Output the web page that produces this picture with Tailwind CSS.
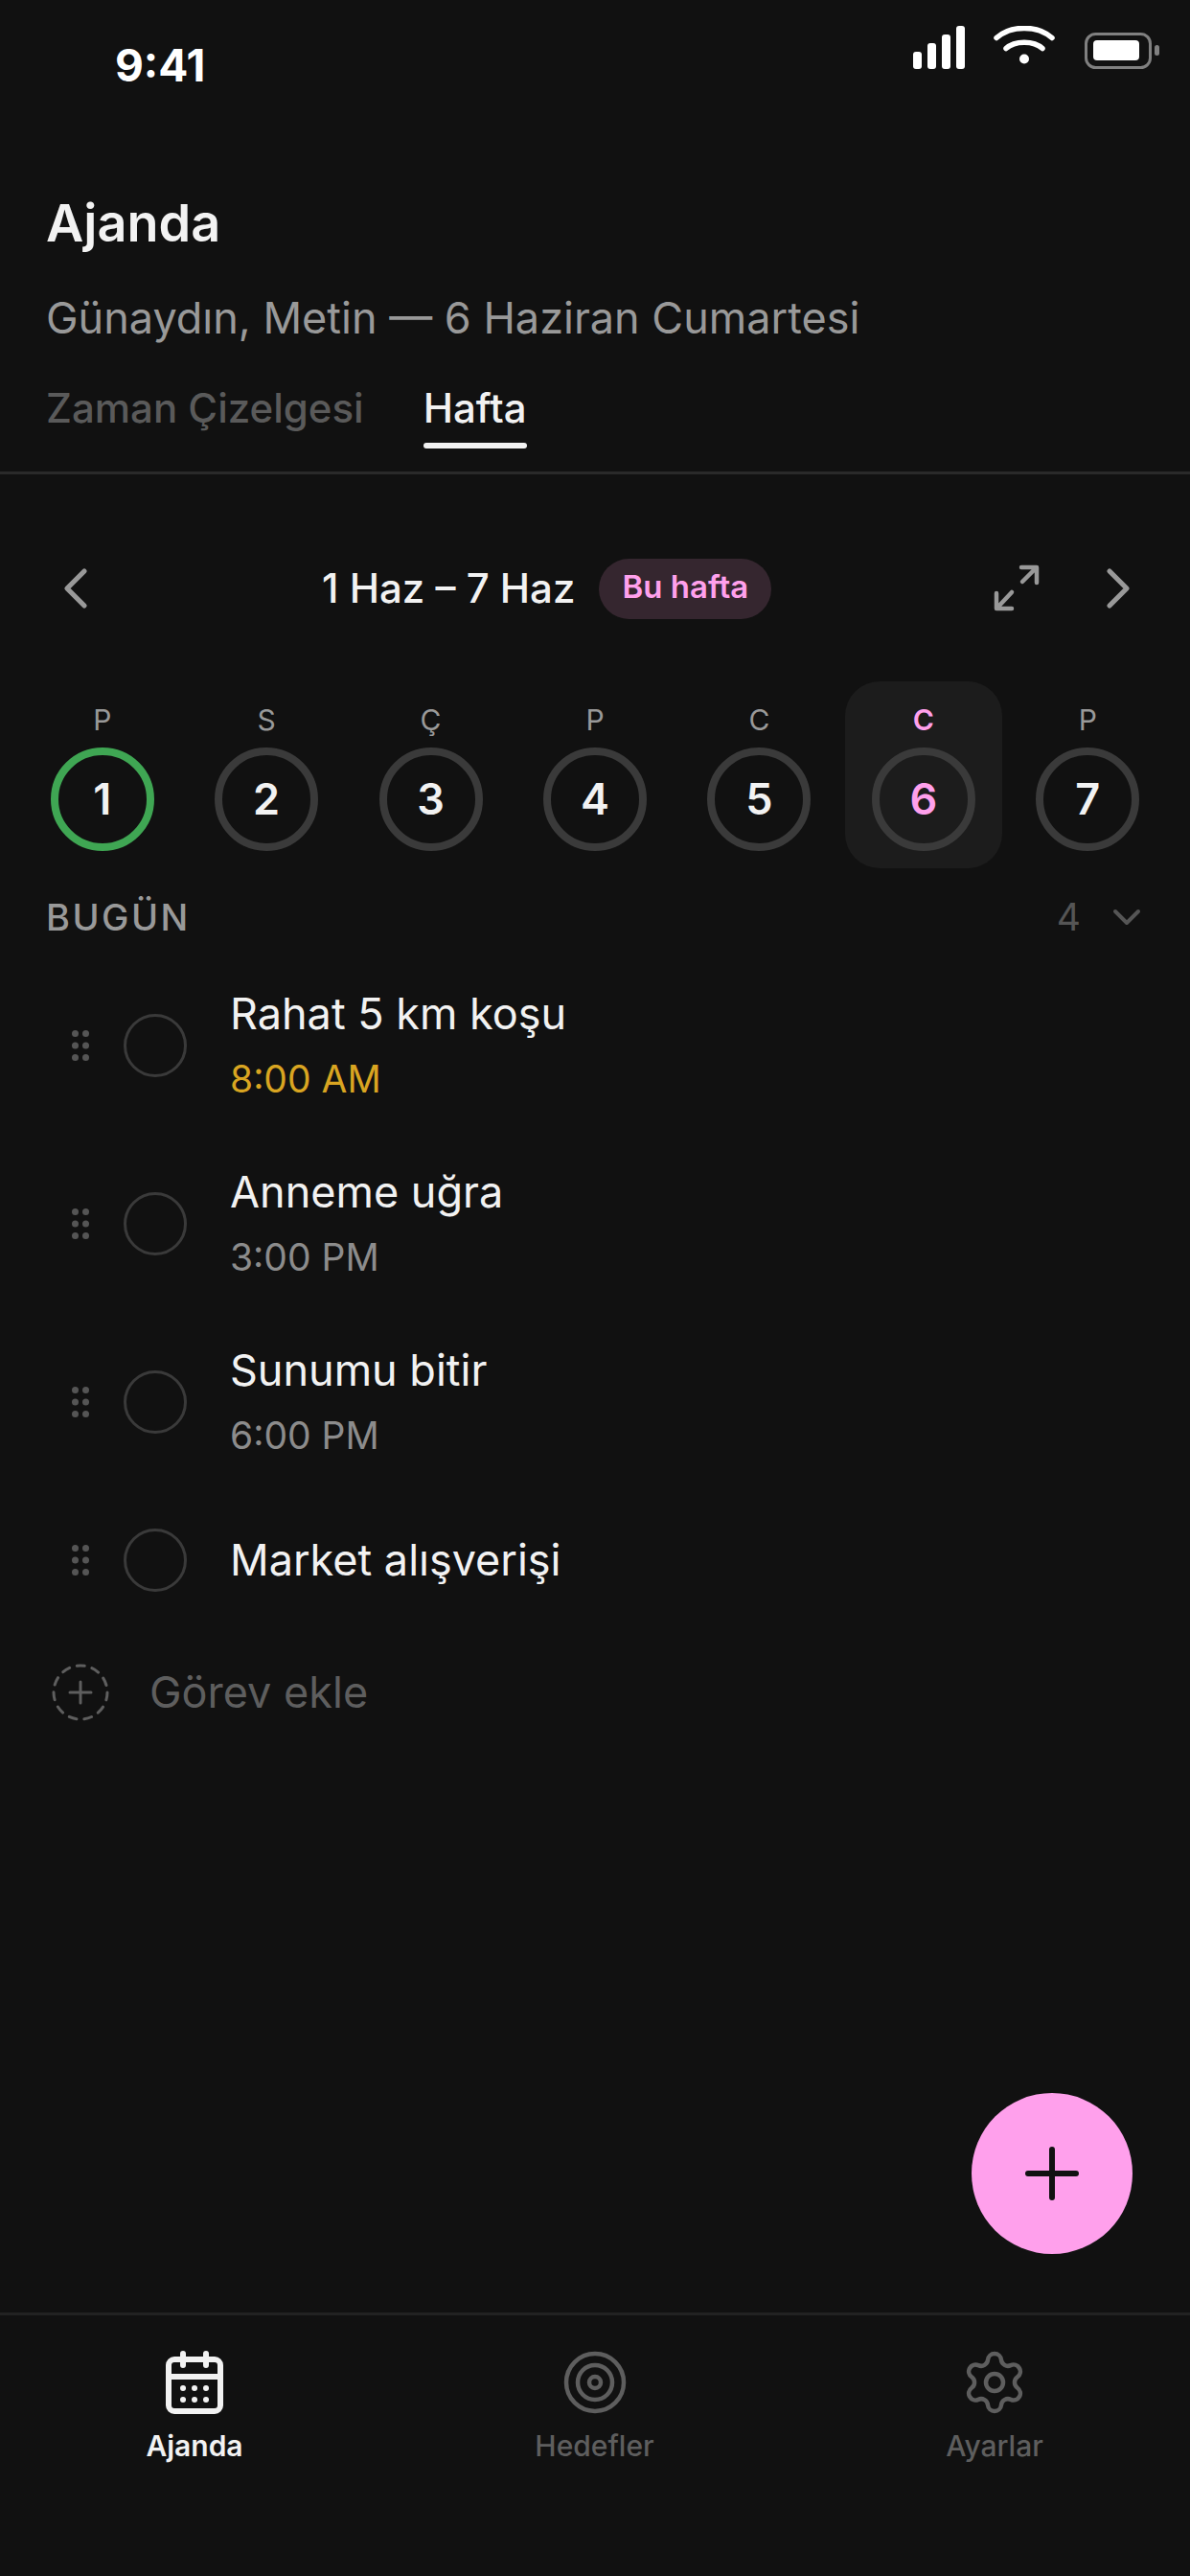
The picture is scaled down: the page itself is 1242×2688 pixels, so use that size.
<!DOCTYPE html>
<html lang="tr">
  <head>
    <meta charset="UTF-8">
    <meta name="viewport" content="width=device-width, initial-scale=1.0">
    <title>Ajanda</title>
    <script src="https://cdn.jsdelivr.net/npm/@tailwindcss/browser@4"></script>
  </head>
  <body class="bg-[#111111]">
    <div class="relative flex flex-col w-[1242px] h-[2688px] overflow-hidden bg-[#111111] text-[#f2f2f2] font-['Inter',sans-serif]">
      <!-- Status bar -->
      <div class="relative h-[192px] shrink-0">
        <span class="absolute left-[120px] top-[38px] text-[46px] leading-[60px] font-bold text-white">9:41</span>
        <svg class="absolute left-[953px] top-[27px]" width="257" height="46" viewBox="0 0 257 46" fill="none">
          <rect x="0" y="27" width="9" height="18" rx="3" fill="#fff"/>
          <rect x="15" y="18" width="9" height="27" rx="3" fill="#fff"/>
          <rect x="30" y="9" width="9" height="36" rx="3" fill="#fff"/>
          <rect x="45" y="0" width="9" height="45" rx="3" fill="#fff"/>
          <path d="M87 12.500C102 -1 130 -1 145 12.500" stroke="#fff" stroke-width="5.500" stroke-linecap="round"/>
          <path d="M97 23.500C106 15 126 15 135 23.500" stroke="#fff" stroke-width="5.500" stroke-linecap="round"/>
          <circle cx="116" cy="34.500" r="5" fill="#fff"/>
          <rect x="180.500" y="8.500" width="67" height="35" rx="10" stroke="#808080" stroke-width="3"/>
          <rect x="188" y="15" width="48" height="21" rx="4" fill="#fff"/>
          <rect x="252" y="20" width="5" height="11" rx="2.500" fill="#808080"/>
        </svg>
      </div>

      <!-- Header -->
      <h1 class="px-[48px] text-[54px] leading-[82px] font-semibold">Ajanda</h1>
      <p class="mt-[28px] px-[48px] text-[45px] leading-[60px] text-[#999999]">Günaydın, Metin — 6 Haziran Cumartesi</p>
      <div class="mt-[34px] flex gap-[62px] px-[48px] pb-[24px] border-b-[3px] border-[#2a2a2a] text-[42px] leading-[60px] font-medium">
        <span class="text-[#5a5a5a]">Zaman Çizelgesi</span>
        <div class="flex flex-col">
          <span>Hafta</span>
          <span class="mt-[6px] h-[6px] rounded-[3px] bg-[#f2f2f2]"></span>
        </div>
      </div>

      <!-- Week navigation -->
      <div class="mt-[59px] h-[120px] flex items-center pl-[43px] pr-[39px]">
        <svg width="72" height="72" viewBox="0 0 24 24" fill="none" stroke="#999999" stroke-width="1.750" stroke-linecap="round" stroke-linejoin="round"><path d="M15 18l-6-6 6-6"/></svg>
        <div class="ml-[221px] flex items-center gap-[25px]">
          <span class="text-[42px] leading-[60px] font-medium">1 Haz – 7 Haz</span>
          <span class="h-[63px] w-[180px] rounded-full bg-[#35262f] text-[#ffa0ec] text-[33px] leading-[58px] font-semibold text-center">Bu hafta</span>
        </div>
        <svg class="ml-auto" width="72" height="72" viewBox="0 0 72 72" fill="none" stroke="#999999" stroke-width="4.500" stroke-linecap="round" stroke-linejoin="round">
          <path d="M42 29L56 15M41 14H57V30"/>
          <path d="M31 40L16 56M15 41V57H31"/>
        </svg>
        <svg class="ml-[34px]" width="72" height="72" viewBox="0 0 24 24" fill="none" stroke="#999999" stroke-width="1.750" stroke-linecap="round" stroke-linejoin="round"><path d="M9 18l6-6-6-6"/></svg>
      </div>

      <!-- Days -->
      <div class="mt-[37px] grid grid-cols-7 px-[21px]">
        <div class="flex flex-col items-center h-[195px] pt-[20px]">
          <span class="text-[30px] leading-[40px] text-[#999999]">P</span>
          <span class="mt-[9px] flex items-center justify-center w-[108px] h-[108px] rounded-full border-[8px] border-[#3fa653] text-[45px] font-semibold">1</span>
        </div>
        <div class="flex flex-col items-center h-[195px] pt-[20px]">
          <span class="text-[30px] leading-[40px] text-[#999999]">S</span>
          <span class="mt-[9px] flex items-center justify-center w-[108px] h-[108px] rounded-full border-[8px] border-[#3a3a3a] text-[45px] font-semibold">2</span>
        </div>
        <div class="flex flex-col items-center h-[195px] pt-[20px]">
          <span class="text-[30px] leading-[40px] text-[#999999]">Ç</span>
          <span class="mt-[9px] flex items-center justify-center w-[108px] h-[108px] rounded-full border-[8px] border-[#3a3a3a] text-[45px] font-semibold">3</span>
        </div>
        <div class="flex flex-col items-center h-[195px] pt-[20px]">
          <span class="text-[30px] leading-[40px] text-[#999999]">P</span>
          <span class="mt-[9px] flex items-center justify-center w-[108px] h-[108px] rounded-full border-[8px] border-[#3a3a3a] text-[45px] font-semibold">4</span>
        </div>
        <div class="flex flex-col items-center h-[195px] pt-[20px]">
          <span class="text-[30px] leading-[40px] text-[#999999]">C</span>
          <span class="mt-[9px] flex items-center justify-center w-[108px] h-[108px] rounded-full border-[8px] border-[#3a3a3a] text-[45px] font-semibold">5</span>
        </div>
        <div class="flex flex-col items-center justify-self-center w-[164px] h-[195px] pt-[20px] rounded-[36px] bg-[#1c1c1c]">
          <span class="text-[30px] leading-[40px] font-semibold text-[#ffa0ec]">C</span>
          <span class="mt-[9px] flex items-center justify-center w-[108px] h-[108px] rounded-full border-[8px] border-[#3a3a3a] text-[45px] font-semibold text-[#ffa0ec]">6</span>
        </div>
        <div class="flex flex-col items-center h-[195px] pt-[20px]">
          <span class="text-[30px] leading-[40px] text-[#999999]">P</span>
          <span class="mt-[9px] flex items-center justify-center w-[108px] h-[108px] rounded-full border-[8px] border-[#3a3a3a] text-[45px] font-semibold">7</span>
        </div>
      </div>

      <!-- Section header -->
      <div class="mt-[27px] h-[48px] flex items-center pl-[48px] pr-[42px]">
        <span class="text-[38px] leading-[48px] font-medium tracking-[2.500px] text-[#999999]">BUGÜN</span>
        <span class="ml-auto text-[39px] leading-[48px] text-[#555555]">4</span>
        <svg class="ml-[24px]" width="48" height="48" viewBox="0 0 24 24" fill="none" stroke="#555555" stroke-width="2" stroke-linecap="round" stroke-linejoin="round"><path d="M6 9l6 6 6-6"/></svg>
      </div>

      <!-- Tasks -->
      <div class="mt-[17px] flex flex-col">
        <div class="h-[186px] flex items-center pl-[75px]">
          <svg width="18" height="32" viewBox="0 0 18 32" fill="#555555"><circle cx="3.500" cy="3.500" r="3.500"/><circle cx="14.500" cy="3.500" r="3.500"/><circle cx="3.500" cy="16" r="3.500"/><circle cx="14.500" cy="16" r="3.500"/><circle cx="3.500" cy="28.500" r="3.500"/><circle cx="14.500" cy="28.500" r="3.500"/></svg>
          <span class="ml-[36px] w-[66px] h-[66px] rounded-full border-[3px] border-[#3a3a3a]"></span>
          <div class="ml-[45px] pt-[2px]">
            <div class="text-[45px] leading-[66px]">Rahat 5 km koşu</div>
            <div class="mt-[2px] text-[39px] leading-[66px] text-[#d9a521]">8:00 AM</div>
          </div>
        </div>
        <div class="h-[186px] flex items-center pl-[75px]">
          <svg width="18" height="32" viewBox="0 0 18 32" fill="#555555"><circle cx="3.500" cy="3.500" r="3.500"/><circle cx="14.500" cy="3.500" r="3.500"/><circle cx="3.500" cy="16" r="3.500"/><circle cx="14.500" cy="16" r="3.500"/><circle cx="3.500" cy="28.500" r="3.500"/><circle cx="14.500" cy="28.500" r="3.500"/></svg>
          <span class="ml-[36px] w-[66px] h-[66px] rounded-full border-[3px] border-[#3a3a3a]"></span>
          <div class="ml-[45px] pt-[2px]">
            <div class="text-[45px] leading-[66px]">Anneme uğra</div>
            <div class="mt-[2px] text-[39px] leading-[66px] text-[#8c8c8c]">3:00 PM</div>
          </div>
        </div>
        <div class="h-[186px] flex items-center pl-[75px]">
          <svg width="18" height="32" viewBox="0 0 18 32" fill="#555555"><circle cx="3.500" cy="3.500" r="3.500"/><circle cx="14.500" cy="3.500" r="3.500"/><circle cx="3.500" cy="16" r="3.500"/><circle cx="14.500" cy="16" r="3.500"/><circle cx="3.500" cy="28.500" r="3.500"/><circle cx="14.500" cy="28.500" r="3.500"/></svg>
          <span class="ml-[36px] w-[66px] h-[66px] rounded-full border-[3px] border-[#3a3a3a]"></span>
          <div class="ml-[45px] pt-[2px]">
            <div class="text-[45px] leading-[66px]">Sunumu bitir</div>
            <div class="mt-[2px] text-[39px] leading-[66px] text-[#8c8c8c]">6:00 PM</div>
          </div>
        </div>
        <div class="h-[144px] flex items-center pl-[75px]">
          <svg width="18" height="32" viewBox="0 0 18 32" fill="#555555"><circle cx="3.500" cy="3.500" r="3.500"/><circle cx="14.500" cy="3.500" r="3.500"/><circle cx="3.500" cy="16" r="3.500"/><circle cx="14.500" cy="16" r="3.500"/><circle cx="3.500" cy="28.500" r="3.500"/><circle cx="14.500" cy="28.500" r="3.500"/></svg>
          <span class="ml-[36px] w-[66px] h-[66px] rounded-full border-[3px] border-[#3a3a3a]"></span>
          <div class="ml-[45px] text-[45px] leading-[66px]">Market alışverişi</div>
        </div>
      </div>

      <!-- Add task -->
      <div class="mt-[6px] h-[120px] flex items-center pl-[54px]">
        <svg width="60" height="60" viewBox="0 0 60 60" fill="none" stroke="#5e5e5e" stroke-width="3" stroke-linecap="round">
          <circle cx="30" cy="30" r="28" stroke-dasharray="8 8"/>
          <path d="M30 19V41M19 30H41"/>
        </svg>
        <span class="ml-[42px] text-[45px] leading-[66px] text-[#5e5e5e]">Görev ekle</span>
      </div>

      <!-- FAB -->
      <button class="absolute left-[1014px] top-[2184px] flex items-center justify-center w-[168px] h-[168px] rounded-full bg-[#ffa0ec]">
        <svg width="72" height="72" viewBox="0 0 72 72" fill="none" stroke="#111111" stroke-width="6" stroke-linecap="round"><path d="M36 11V61M11 36H61"/></svg>
      </button>

      <!-- Tab bar -->
      <nav class="mt-auto h-[275px] flex justify-between pl-[103px] pr-[104px] pt-[34px] border-t-[3px] border-[#222222]">
        <div class="w-[200px] flex flex-col items-center">
          <svg width="72" height="72" viewBox="0 0 24 24" fill="none" stroke="#f2f2f2" stroke-width="2" stroke-linecap="round" stroke-linejoin="round">
            <path d="M8 2v4M16 2v4"/>
            <rect x="3" y="4" width="18" height="18" rx="2"/>
            <path d="M3 10h18M8 14h.01M12 14h.01M16 14h.01M8 18h.01M12 18h.01M16 18h.01"/>
          </svg>
          <span class="mt-[8px] text-[30px] leading-[44px] font-semibold">Ajanda</span>
        </div>
        <div class="w-[200px] flex flex-col items-center">
          <svg width="72" height="72" viewBox="0 0 24 24" fill="none" stroke="#5e5e5e" stroke-width="1.500" stroke-linecap="round" stroke-linejoin="round">
            <circle cx="12" cy="12" r="10"/><circle cx="12" cy="12" r="6"/><circle cx="12" cy="12" r="2"/>
          </svg>
          <span class="mt-[8px] text-[30px] leading-[44px] font-medium text-[#5e5e5e]">Hedefler</span>
        </div>
        <div class="w-[200px] flex flex-col items-center">
          <svg width="72" height="72" viewBox="0 0 24 24" fill="none" stroke="#5e5e5e" stroke-width="1.500" stroke-linecap="round" stroke-linejoin="round">
            <path d="M9.671 4.136a2.34 2.34 0 0 1 4.659 0 2.34 2.34 0 0 0 3.319 1.915 2.34 2.34 0 0 1 2.33 4.033 2.34 2.34 0 0 0 0 3.831 2.34 2.34 0 0 1-2.33 4.033 2.34 2.34 0 0 0-3.319 1.915 2.34 2.34 0 0 1-4.659 0 2.34 2.34 0 0 0-3.32-1.915 2.34 2.34 0 0 1-2.33-4.033 2.34 2.34 0 0 0 0-3.831A2.34 2.34 0 0 1 6.35 6.051a2.34 2.34 0 0 0 3.319-1.915"/>
            <circle cx="12" cy="12" r="3"/>
          </svg>
          <span class="mt-[8px] text-[30px] leading-[44px] font-medium text-[#5e5e5e]">Ayarlar</span>
        </div>
      </nav>
    </div>
  </body>
</html>
